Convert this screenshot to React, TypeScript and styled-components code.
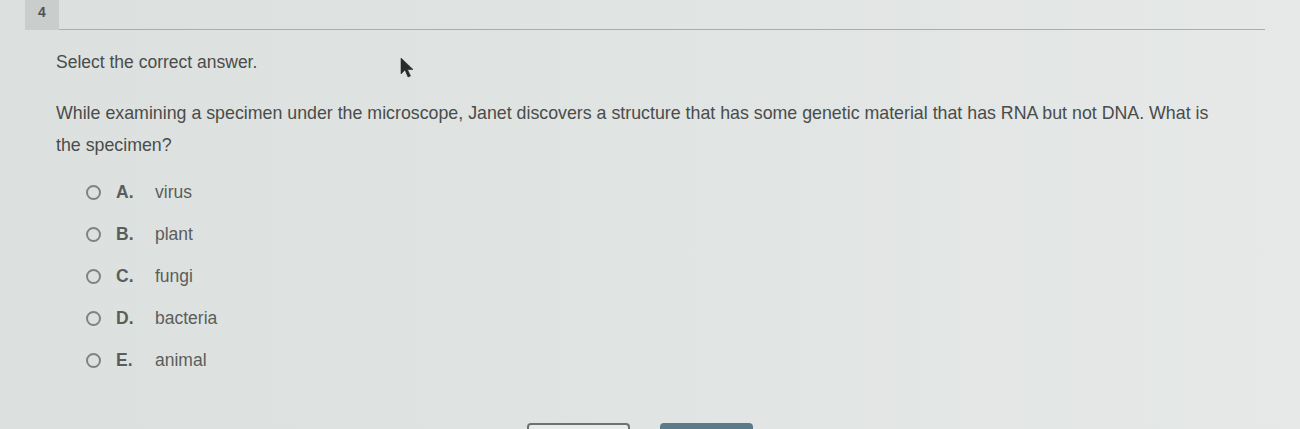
import React, { FC } from 'react';
import styled, { createGlobalStyle } from 'styled-components';

const GlobalStyle = createGlobalStyle`
  html, body {
    margin:0;
    padding:0;
  }
  body {
    width:1300px;
    height:429px;
    overflow:hidden;
    background:linear-gradient(90deg, #dce1df 0%, #e0e4e2 50%, #e6e9e8 100%);
    font-family:"Liberation Sans", Arial, sans-serif;
    color:#4b4d4c;
  }
`;

const Page = styled.div`
  position:relative;
  height:429px;
  padding:0 35px 0 25px;
  box-sizing:border-box;
  display:flex;
  flex-direction:column;
`;

const Header = styled.div`
  display:flex;
  align-items:stretch;
  height:30px;
`;

const Badge = styled.div`
  width:34px;
  background:#c9cdcb;
  display:flex;
  align-items:center;
  justify-content:center;
  font-size:14px;
  font-weight:bold;
  color:#505352;
  padding-bottom:7px;
  box-sizing:border-box;
`;

const Rule = styled.div`
  flex:1;
  border-bottom:1px solid #a9adab;
`;

const Body = styled.div`
  padding:22px 0 0 31px;
  display:flex;
  flex-direction:column;
`;

const Prompt = styled.p`
  margin:0;
  font-size:17.5px;
  line-height:20px;
  color:#4a4c4b;
`;

const Question = styled.p`
  margin:25px 0 0;
  font-size:17.8px;
  line-height:32px;
  color:#4a4c4b;
`;

const Options = styled.ul`
  list-style:none;
  margin:21px 0 0;
  padding:0 0 0 30px;
  display:flex;
  flex-direction:column;
  gap:22px;
`;

const Option = styled.li`
  display:flex;
  align-items:center;
  height:20px;
  font-size:17.5px;
`;

const Radio = styled.span`
  width:11px;
  height:11px;
  border:2px solid #7f8382;
  border-radius:50%;
  margin-right:15px;
  flex-shrink:0;
`;

const Letter = styled.span`
  width:39px;
  font-weight:bold;
  color:#5a5d5c;
`;

const Choice = styled.span`
  color:#5a5d5c;
`;

const Footer = styled.div`
  margin-top:auto;
  display:flex;
  gap:30px;
  padding-left:502px;
`;

const FooterButton = styled.div<{ $primary?: boolean }>`
  width:${p => (p.$primary ? '93px' : '103px')};
  height:6px;
  border-radius:4px 4px 0 0;
  box-sizing:border-box;
  background:${p => (p.$primary ? '#5d7a89' : '#e9ecea')};
  border:${p => (p.$primary ? 'none' : '2px solid #6e7371')};
  border-bottom:none;
`;

const Cursor = styled.svg`
  position:absolute;
  left:400px;
  top:57px;
`;

const answers = [
  { letter: 'A.', text: 'virus' },
  { letter: 'B.', text: 'plant' },
  { letter: 'C.', text: 'fungi' },
  { letter: 'D.', text: 'bacteria' },
  { letter: 'E.', text: 'animal' },
];

const App: FC = () => (
  <>
    <GlobalStyle />
    <Page>
      <Header>
        <Badge>4</Badge>
        <Rule />
      </Header>
      <Body>
        <Prompt>Select the correct answer.</Prompt>
        <Question>
          While examining a specimen under the microscope, Janet discovers a structure that has some genetic material that has RNA but not DNA. What is
          <br />
          the specimen?
        </Question>
        <Options>
          {answers.map(a => (
            <Option key={a.letter}>
              <Radio />
              <Letter>{a.letter}</Letter>
              <Choice>{a.text}</Choice>
            </Option>
          ))}
        </Options>
      </Body>
      <Footer>
        <FooterButton />
        <FooterButton $primary />
      </Footer>
      <Cursor width="14" height="22" viewBox="0 0 14 22">
        <path d="M1 1 L1 17 L5 13 L8 20 L10.5 19 L7.5 12.5 L13 12.5 Z" fill="#2a2c2b" stroke="#2a2c2b" strokeWidth="0.6" />
      </Cursor>
    </Page>
  </>
);

export default App;
